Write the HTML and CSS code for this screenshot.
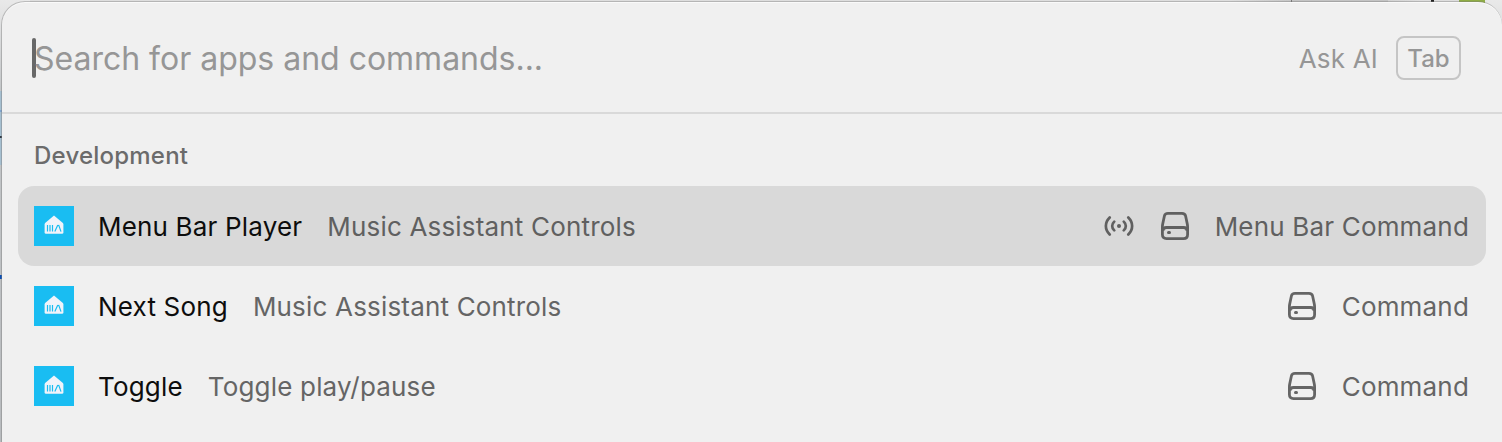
FILE: index.html
```html
<!DOCTYPE html>
<html lang="en">
<head>
<meta charset="utf-8">
<title>Launcher</title>
<link rel="stylesheet" href="styles.css">
</head>
<body>
<svg class="symbols" aria-hidden="true">
  <symbol id="house" viewBox="0 0 40 40">
    <path d="M20 9.400 28.600 16.800Q29.400 17.500 29.400 18.500V26.400Q29.400 27.800 28 27.800H12Q10.600 27.800 10.600 26.400V18.500Q10.600 17.500 11.400 16.800Z" fill="#f1f3fa"/>
    <path d="M13.500 19v6.600M16 19v6.600M18.500 19v6.600M23.800 18.900l-3 6.700M24.600 18.900l2.400 6.700" fill="none" stroke="#19bdf2" stroke-width="1.2"/>
  </symbol>
  <symbol id="drive" viewBox="0 0 28 28">
    <path d="M7 1.400H21Q24 1.400 24.600 4L26.300 12Q26.600 13.400 26.600 15V22.500Q26.600 26.600 22.500 26.600H5.500Q1.400 26.600 1.400 22.500V15Q1.400 13.400 1.700 12L3.400 4Q4 1.400 7 1.400Z" fill="none" stroke="currentColor" stroke-width="2.8"/>
    <path d="M2 18.800Q2 15.500 5.500 15.500H22.500Q26 15.500 26 18.800" fill="none" stroke="currentColor" stroke-width="2.800"/>
    <path d="M7.500 20.500h1" stroke="currentColor" stroke-width="3" stroke-linecap="round"/>
  </symbol>
  <symbol id="signal" viewBox="0 0 30 20">
    <g fill="none" stroke="currentColor" stroke-width="2.700" stroke-linecap="round">
      <path d="M5.700 1.500C.600 6.500 .600 13.500 5.700 18.500M10.200 5.600C7.500 8.200 7.500 11.800 10.200 14.400M19.800 5.600C22.500 8.200 22.500 11.800 19.800 14.400M24.300 1.500C29.400 6.500 29.400 13.500 24.300 18.500"/>
    </g>
    <circle cx="15" cy="10" r="2" fill="currentColor"/>
  </symbol>
</svg>
<div class="desktop">
  <main class="launcher">
    <header class="search">
      <span class="caret"></span>
      <span class="placeholder">Search for apps and commands...</span>
      <span class="ask">Ask AI</span>
      <kbd class="key">Tab</kbd>
    </header>
    <section class="results">
      <h2 class="heading">Development</h2>
      <div class="row selected">
        <svg class="app"><use href="#house"/></svg>
        <span class="title">Menu Bar Player</span>
        <span class="subtitle">Music Assistant Controls</span>
        <svg class="signal"><use href="#signal"/></svg>
        <svg class="drive"><use href="#drive"/></svg>
        <span class="kind">Menu Bar Command</span>
      </div>
      <div class="row">
        <svg class="app"><use href="#house"/></svg>
        <span class="title">Next Song</span>
        <span class="subtitle">Music Assistant Controls</span>
        <svg class="drive"><use href="#drive"/></svg>
        <span class="kind">Command</span>
      </div>
      <div class="row">
        <svg class="app"><use href="#house"/></svg>
        <span class="title">Toggle</span>
        <span class="subtitle">Toggle play/pause</span>
        <svg class="drive"><use href="#drive"/></svg>
        <span class="kind">Command</span>
      </div>
    </section>
  </main>
</div>
</body>
</html>
```
FILE: styles.css
```css
* { box-sizing: border-box; }
body { margin: 0; font-family: Inter, "Liberation Sans", sans-serif; font-size: 26px; color: #656565; }
.symbols { position: absolute; width: 0; height: 0; }
.desktop {
  height: 442px;
  padding: 1px 0 0 1px;
  overflow: hidden;
  background:
    linear-gradient(#0a4fb5, #0a4fb5) 0 275px / 2px 4px no-repeat,
    linear-gradient(#303c48, #303c48) 0 136px / 2px 2px no-repeat,
    linear-gradient(#7fa5d0, #7fa5d0) 0 110px / 2px 2px no-repeat,
    linear-gradient(#a5bfd0, #a5bfd0) 0 91px / 2px 74px no-repeat,
    linear-gradient(#8fad45, #8fad45) 1459px 0 / 26px 3px no-repeat,
    linear-gradient(#222, #222) 1431px 0 / 3px 2px no-repeat,
    linear-gradient(#777, #777) 1291px 0 / 1px 2px no-repeat,
    linear-gradient(#c4c4c4, #c4c4c4) 1292px 0 / 96px 2px no-repeat,
    linear-gradient(90deg, #dedede 1200px, #bcbcbc 1290px, #dedede 1390px) 30px 0 / 1440px 2px no-repeat,
    linear-gradient(#e9e9e9, #c3c6c8 90px, #b8bbbe);
}
.launcher { height: 470px; border: 1px solid rgba(120, 120, 120, .4); border-right: 0; border-radius: 24px; background: #f0f0f0 padding-box; box-shadow: inset 0 1px #fafafa; }
.search { display: flex; align-items: center; height: 112px; padding: 2px 41px 0 30px; border-bottom: 2px solid #d9d9d9; color: #969696; }
.caret { width: 4px; height: 40px; border-radius: 2px; background: #686868; }
.placeholder { margin-left: -2px; font-size: 32px; letter-spacing: -.01px; white-space: nowrap; }
.ask { margin-left: auto; letter-spacing: .2px; }
.key { display: flex; align-items: center; justify-content: center; width: 65px; height: 44px; margin-left: 18px; border: 2px solid #c5c5c5; border-radius: 8px; font: 500 24px Inter, sans-serif; }
.results { padding: 22px 16px 0; }
.heading { margin: 0; padding: 0 16px; height: 50px; font-size: 24px; line-height: 40px; font-weight: 500; letter-spacing: .22px; color: #6b6b6b; }
.row { display: flex; align-items: center; height: 80px; padding: 0 17px 0 16px; letter-spacing: .18px; white-space: nowrap; }
.selected { border-radius: 16px; background: #d9d9d9; color: #606060; }
.app { width: 40px; height: 40px; background: #19bdf2; }
.title { margin-left: 24px; color: #0d0d0d; }
.subtitle { margin: 0 auto 0 25px; }
.signal { width: 30px; height: 20px; margin-right: 27px; }
.drive { width: 28px; height: 28px; margin-right: 26px; }
```
